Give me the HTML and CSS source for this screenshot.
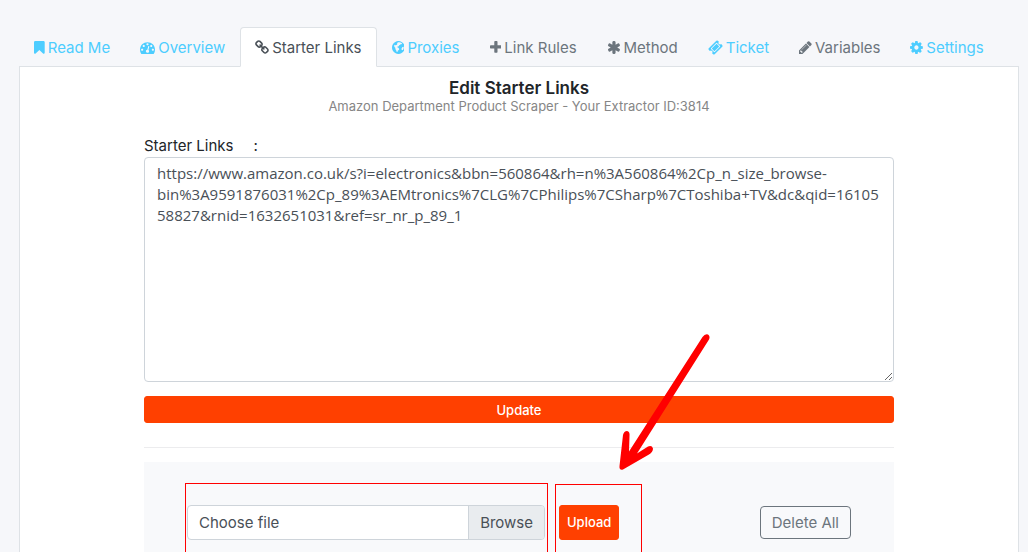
FILE: index.html
```
<!DOCTYPE html>
<html lang="en">
<head>
    <meta charset="UTF-8">
    <meta name="viewport" content="width=device-width, initial-scale=1.0">
    <title>Edit Starter Links</title>
    <link rel="stylesheet" href="styles.css">
</head>
<body>
    <div class="page">
        <nav class="tabs">
            <a class="tab" href="#readme">
                <svg class="icon" viewBox="256 0 1280 1792"><path d="M1420 128q23 0 44 9 33 13 52.500 41t19.500 62v1289q0 34-19.500 62t-52.500 41q-19 8-44 8-48 0-83-32l-441-424-441 424q-36 33-83 33-23 0-44-9-33-13-52.500-41t-19.500-62v-1289q0-34 19.500-62t52.500-41q21-9 44-9h1048z"/></svg>
                Read Me
            </a>
            <a class="tab" href="#overview">
                <svg class="icon" viewBox="0 0 1792 1792"><path d="M384 1152q0-53-37.500-90.500t-90.500-37.500-90.500 37.500-37.500 90.500 37.500 90.500 90.500 37.500 90.500-37.500 37.500-90.500zm192-448q0-53-37.500-90.500t-90.500-37.500-90.500 37.500-37.500 90.500 37.500 90.500 90.500 37.500 90.500-37.500 37.500-90.500zm428 481l101-382q6-26-7.500-48.500t-38.500-29.500-48 6.500-30 39.500l-101 382q-60 5-107 43.500t-63 98.500q-20 77 20 146t117 89 146-20 89-117q16-60-6-117t-72-91zm660-33q0-53-37.500-90.500t-90.500-37.500-90.500 37.500-37.500 90.500 37.500 90.500 90.500 37.500 90.500-37.500 37.500-90.500zm-640-640q0-53-37.500-90.500t-90.500-37.500-90.500 37.500-37.500 90.500 37.500 90.500 90.500 37.500 90.500-37.500 37.500-90.500zm448 192q0-53-37.500-90.500t-90.500-37.500-90.500 37.500-37.500 90.500 37.500 90.500 90.500 37.500 90.500-37.500 37.500-90.500zm320 448q0 261-141 483-19 29-54 29h-1402q-35 0-54-29-141-221-141-483 0-182 71-348t191-286 286-191 348-71 348 71 286 191 191 286 71 348z"/></svg>
                Overview
            </a>
            <a class="tab active" href="#starter">
                <svg class="icon" viewBox="64 0 1664 1792"><path d="M1520 1216q0-40-28-68l-208-208q-28-28-68-28-42 0-72 32 3 3 19 18.500t21.500 21.500 15 19 13 25.500 3.500 27.500q0 40-28 68t-68 28q-15 0-27.500-3.500t-25.500-13-19-15-21.500-21.500-18.500-19q-33 31-33 73 0 40 28 68l206 207q27 27 68 27 40 0 68-26l147-146q28-28 28-67zm-703-705q0-40-28-68l-206-207q-28-28-68-28-39 0-68 27l-147 146q-28 28-28 67 0 40 28 68l208 208q27 27 68 27 42 0 72-31-3-3-19-18.500t-21.500-21.500-15-19-13-25.500-3.500-27.500q0-40 28-68t68-28q15 0 27.500 3.500t25.500 13 19 15 21.500 21.500 18.500 19q33-31 33-73zm895 705q0 120-85 203l-147 146q-83 83-203 83-121 0-204-85l-206-207q-83-83-83-203 0-123 88-209l-88-88q-86 88-208 88-120 0-204-84l-208-208q-84-84-84-204t85-203l147-146q83-83 203-83 121 0 204 85l206 207q83 83 83 203 0 123-88 209l88 88q86-88 208-88 120 0 204 84l208 208q84 84 84 204z"/></svg>
                Starter Links
            </a>
            <a class="tab" href="#proxies">
                <svg class="icon" viewBox="128 0 1536 1792"><path fill-rule="evenodd" d="M896 128a768 768 0 1 0 1 0zM1040 270l180 70 130 110-60 60-120-30-70 110-130 50-30 110-150 20-30 110 130 60 110 130-50 130-120 60-50 170-100-20-50-190-110-130 20-120-90-110-70-150 50-130 110 60 130-30 110-120-60-110 130-110zM1350 880l150-60 40 120-80 220-130 60-80-150z"/></svg>
                Proxies
            </a>
            <a class="tab muted" href="#rules">
                <svg class="icon" viewBox="192 0 1408 1792"><path d="M1600 736v192q0 40-28 68t-68 28h-416v416q0 40-28 68t-68 28h-192q-40 0-68-28t-28-68v-416h-416q-40 0-68-28t-28-68v-192q0-40 28-68t68-28h416v-416q0-40 28-68t68-28h192q40 0 68 28t28 68v416h416q40 0 68 28t28 68z"/></svg>
                Link Rules
            </a>
            <a class="tab muted" href="#method">
                <svg class="icon" viewBox="64 0 1664 1792"><path d="M1546 1050q46 26 59.500 77.500t-12.500 97.500l-64 110q-26 46-77.500 59.500t-97.500-12.500l-266-153v307q0 52-38 90t-90 38h-128q-52 0-90-38t-38-90v-307l-266 153q-46 26-97.500 12.500t-77.500-59.500l-64-110q-26-46-12.500-97.500t59.500-77.500l266-154-266-154q-46-26-59.500-77.500t12.500-97.500l64-110q26-46 77.500-59.500t97.500 12.500l266 153v-307q0-52 38-90t90-38h128q52 0 90 38t38 90v307l266-153q46-26 97.500-12.500t77.500 59.500l64 110q26 46 12.500 97.500t-59.500 77.500l-266 154z"/></svg>
                Method
            </a>
            <a class="tab" href="#ticket">
                <svg class="icon" viewBox="0 0 1792 1792"><path d="M1024 452l316 316-572 572-316-316zm-211 979l618-618q19-19 19-45t-19-45l-362-362q-18-18-45-18t-45 18l-618 618q-19 19-19 45t19 45l362 362q18 18 45 18t45-18zm889-637l-907 908q-37 37-90.500 37t-90.500-37l-126-126q56-56 56-136t-56-136-136-56-136 56l-125-126q-37-37-37-90.500t37-90.500l907-906q37-37 90.500-37t90.500 37l125 125q-56 56-56 136t56 136 136 56 136-56l126 125q37 37 37 90.500t-37 90.500z"/></svg>
                Ticket
            </a>
            <a class="tab muted" href="#variables">
                <svg class="icon" viewBox="128 0 1536 1792"><path d="M491 1536l91-91-235-235-91 91v107h128v128h107zm523-928q0-22-22-22-10 0-17 7l-542 542q-7 7-7 17 0 22 22 22 10 0 17-7l542-542q7-7 7-17zm-54-192l416 416-832 832h-416v-416zm683 96q0 53-37 90l-166 166-416-416 166-165q36-38 90-38 53 0 91 38l235 234q37 39 37 91z"/></svg>
                Variables
            </a>
            <a class="tab" href="#settings">
                <svg class="icon" viewBox="128 0 1536 1792"><path d="M1152 896q0-106-75-181t-181-75-181 75-75 181 75 181 181 75 181-75 75-181zm512-109v222q0 12-8 23t-20 13l-185 28q-19 54-39 91 35 50 107 138 10 12 10 25t-9 23q-27 37-99 108t-94 71q-12 0-26-9l-138-108q-44 23-91 38-16 136-29 186-7 28-36 28h-222q-14 0-24.500-8.500t-11.500-21.500l-28-184q-49-16-90-37l-141 107q-10 9-25 9-14 0-25-11-126-114-165-168-7-10-7-23 0-12 8-23 15-21 51-66.500t54-70.500q-27-50-41-99l-183-27q-13-2-21-12.500t-8-23.500v-222q0-12 8-23t19-13l186-28q14-46 39-92-40-57-107-138-10-12-10-24 0-10 9-23 26-36 98.500-107.500t94.500-71.500q13 0 26 10l138 107q44-23 91-38 16-136 29-186 7-28 36-28h222q14 0 24.500 8.500t11.500 21.500l28 184q49 16 90 37l142-107q9-9 24-9 13 0 25 10 129 119 165 170 7 8 7 22 0 12-8 23-15 21-51 66.500t-54 70.500q26 50 41 98l183 28q13 2 21 12.500t8 23.500z"/></svg>
                Settings
            </a>
        </nav>

        <main class="panel">
            <h1>Edit Starter Links</h1>
            <p class="subtitle">Amazon Department Product Scraper - Your Extractor ID:3814</p>

            <form class="links-form">
                <label class="links-label" for="links"><span>Starter Links</span><span>:</span></label>
                <textarea id="links" class="links" spellcheck="false">https://www.amazon.co.uk/s?i=electronics&amp;bbn=560864&amp;rh=n%3A560864%2Cp_n_size_browse-bin%3A9591876031%2Cp_89%3AEMtronics%7CLG%7CPhilips%7CSharp%7CToshiba+TV&amp;dc&amp;qid=1610558827&amp;rnid=1632651031&amp;ref=sr_nr_p_89_1</textarea>
                <button type="submit" class="btn update">Update</button>
            </form>
            <hr>

            <form class="upload-box">
                <div class="file">
                    <input type="file" id="file" class="file-input">
                    <label for="file" class="file-label"><span class="file-name">Choose file</span><span class="file-browse">Browse</span></label>
                </div>
                <button type="submit" class="btn upload">Upload</button>
                <button type="button" class="btn delete">Delete All</button>
                <div class="mark mark-file"></div>
                <div class="mark mark-upload"></div>
                <svg class="arrow" viewBox="0 0 96 140"><path d="M90 2.500Q92.500 4.500 91 7.500L19 121.500 30 114.500Q34 113 35 116.500 35 120 31 122.500L5 137.500Q1 138.500 1.500 134L5 103Q6 99 9 99 12 99.500 11.500 104L11 119.500 84.500 5Q87 1.500 90 2.500z"/></svg>
            </form>
        </main>
    </div>
</body>
</html>
```
FILE: styles.css
```
* {
    box-sizing: border-box;
}

body {
    margin: 0;
    background-color: #fff;
    color: #212529;
    font-family: Inter, "Open Sans", sans-serif;
    font-size: 15px;
    line-height: 21px;
}

.page {
    padding: 27px 9px 0 19px;
    background-color: #f6f7fa;
}

.tabs {
    display: flex;
}

.tab {
    display: flex;
    align-items: center;
    gap: 3px;
    height: 40px;
    padding: 0 14px;
    border: 1px solid transparent;
    border-radius: 4px 4px 0 0;
    color: #4dcdff;
    text-decoration: none;
    white-space: nowrap;
}

.tab.muted {
    color: #6c757d;
}

.tab.active {
    position: relative;
    background-color: #fff;
    border-color: #dee2e6 #dee2e6 #fff;
    color: #495057;
}

.icon {
    height: 15px;
    fill: currentColor;
}

.panel {
    margin-top: -1px;
    padding: 11px 124px 0;
    border: 1px solid #dee2e6;
    border-bottom: none;
    background-color: #fff;
}

h1 {
    margin: 0;
    font-size: 17px;
    font-weight: 600;
    line-height: 20px;
    text-align: center;
}

.subtitle {
    margin: 0 0 22px;
    color: #868686;
    font-size: 13px;
    line-height: 16px;
    text-align: center;
}

.links-form {
    display: flex;
    flex-direction: column;
}

.links-label {
    display: flex;
    gap: 20px;
    margin-bottom: 1px;
    line-height: 20px;
}

.links {
    height: 225px;
    padding: 5px 12px;
    border: 1px solid #ced4da;
    border-radius: 4px;
    color: #495057;
    font-family: "Open Sans", sans-serif;
    font-size: 15px;
    line-height: 21px;
    overflow-wrap: anywhere;
    resize: vertical;
}

.btn {
    border: 1px solid #ff4000;
    border-radius: 3px;
    background-color: #ff4000;
    color: #fff;
    font-family: inherit;
    font-size: 13px;
    font-weight: 500;
    cursor: pointer;
}

.update {
    height: 27px;
    margin-top: 14px;
}

hr {
    margin: 24px 0 14px;
    border: none;
    border-top: 1px solid #ececee;
}

.upload-box {
    position: relative;
    display: flex;
    align-items: center;
    height: 90px;
    padding: 30px 43px 0;
    background-color: #f8f9fb;
}

.file {
    display: grid;
    width: 358px;
    height: 35px;
}

.file-input,
.file-label {
    grid-area: 1 / 1;
    min-width: 0;
}

.file-input {
    opacity: 0;
}

.file-label {
    display: flex;
    border: 1px solid #ced4da;
    border-radius: 4px;
    background-color: #fff;
    color: #495057;
    line-height: 33px;
    overflow: hidden;
}

.file-name {
    flex: 1;
    padding-left: 11px;
}

.file-browse {
    padding: 0 11px;
    border-left: 1px solid #ced4da;
    background-color: #e9ecef;
}

.upload {
    height: 35px;
    margin-left: 14px;
    padding: 0 7px;
}

.delete {
    height: 33px;
    margin-left: auto;
    padding: 0 11px;
    border-color: #6c757d;
    border-radius: 4px;
    background-color: transparent;
    color: #6c757d;
    font-size: 15px;
    font-weight: 400;
}

/* red marks over the upload controls */
.mark {
    position: absolute;
    border: 1px solid #f00;
    pointer-events: none;
}

.mark-file {
    top: 21px;
    left: 41px;
    width: 363px;
    height: 76px;
}

.mark-upload {
    top: 22px;
    left: 411px;
    width: 87px;
    height: 75px;
}

.arrow {
    position: absolute;
    top: -130px;
    left: 474px;
    width: 96px;
    height: 140px;
    fill: #f00;
    pointer-events: none;
}
```
